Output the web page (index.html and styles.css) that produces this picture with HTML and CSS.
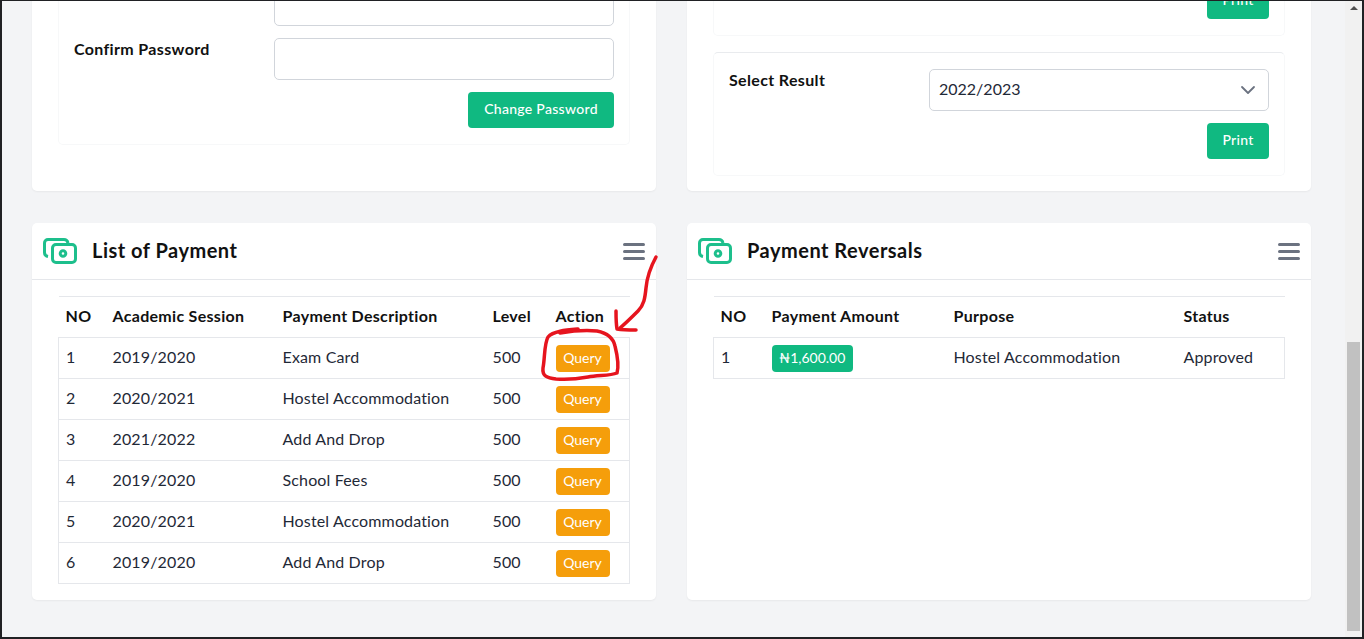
FILE: index.html
```html
<!DOCTYPE html>
<html lang="en">
<head>
    <meta charset="UTF-8">
    <meta name="viewport" content="width=device-width, initial-scale=1.0">
    <title>Student Payments</title>
    <link rel="stylesheet" href="styles.css">
</head>
<body>
    <div class="frame">
        <main class="content">
            <div class="grid">
                <section class="card card-form">
                    <div class="inner">
                        <div class="form-row">
                            <label>New Password</label>
                            <input class="field" type="password">
                        </div>
                        <div class="form-row">
                            <label>Confirm Password</label>
                            <input class="field" type="password">
                        </div>
                        <div class="form-actions">
                            <button class="btn">Change Password</button>
                        </div>
                    </div>
                </section>

                <section class="card card-print">
                    <div class="inner inner-first">
                        <div class="form-actions">
                            <button class="btn btn-print">Print</button>
                        </div>
                    </div>
                    <div class="inner">
                        <div class="form-row">
                            <label>Select Result</label>
                            <select class="field field-select">
                                <option>2022/2023</option>
                            </select>
                        </div>
                        <div class="form-actions">
                            <button class="btn btn-print">Print</button>
                        </div>
                    </div>
                </section>

                <section class="card">
                    <header class="card-head">
                        <svg class="cash-icon" viewBox="0 0 34 26" fill="none" stroke="#1dbf8c" stroke-width="3">
                            <path d="M5 18.5 C2.5 18 1.5 16.5 1.5 14.5 V5 C1.5 3 3 1.5 5 1.5 H21 C23 1.5 24.5 2.8 25 5"/>
                            <rect x="9.5" y="6.5" width="23" height="18" rx="3.5"/>
                            <circle cx="20" cy="15.5" r="2.8"/>
                        </svg>
                        <h2>List of Payment</h2>
                        <div class="menu-icon"><span></span><span></span><span></span></div>
                    </header>
                    <div class="card-body">
                        <table class="data-table payments">
                            <thead>
                                <tr><th>NO</th><th>Academic Session</th><th>Payment Description</th><th>Level</th><th>Action</th></tr>
                            </thead>
                            <tbody>
                                <tr><td>1</td><td>2019/2020</td><td>Exam Card</td><td>500</td><td><button class="pill pill-query">Query</button></td></tr>
                                <tr><td>2</td><td>2020/2021</td><td>Hostel Accommodation</td><td>500</td><td><button class="pill pill-query">Query</button></td></tr>
                                <tr><td>3</td><td>2021/2022</td><td>Add And Drop</td><td>500</td><td><button class="pill pill-query">Query</button></td></tr>
                                <tr><td>4</td><td>2019/2020</td><td>School Fees</td><td>500</td><td><button class="pill pill-query">Query</button></td></tr>
                                <tr><td>5</td><td>2020/2021</td><td>Hostel Accommodation</td><td>500</td><td><button class="pill pill-query">Query</button></td></tr>
                                <tr><td>6</td><td>2019/2020</td><td>Add And Drop</td><td>500</td><td><button class="pill pill-query">Query</button></td></tr>
                            </tbody>
                        </table>
                    </div>
                </section>

                <section class="card">
                    <header class="card-head">
                        <svg class="cash-icon" viewBox="0 0 34 26" fill="none" stroke="#1dbf8c" stroke-width="3">
                            <path d="M5 18.5 C2.5 18 1.5 16.5 1.5 14.5 V5 C1.5 3 3 1.5 5 1.5 H21 C23 1.5 24.5 2.8 25 5"/>
                            <rect x="9.5" y="6.5" width="23" height="18" rx="3.5"/>
                            <circle cx="20" cy="15.5" r="2.8"/>
                        </svg>
                        <h2>Payment Reversals</h2>
                        <div class="menu-icon"><span></span><span></span><span></span></div>
                    </header>
                    <div class="card-body">
                        <table class="data-table reversals">
                            <thead>
                                <tr><th>NO</th><th>Payment Amount</th><th>Purpose</th><th>Status</th></tr>
                            </thead>
                            <tbody>
                                <tr><td>1</td><td><span class="pill pill-amount">₦1,600.00</span></td><td>Hostel Accommodation</td><td>Approved</td></tr>
                            </tbody>
                        </table>
                    </div>
                </section>
            </div>
        </main>

        <div class="scrollbar">
            <span class="scroll-up"></span>
            <span class="scroll-thumb"></span>
        </div>

        <!-- red pen marks drawn over the screenshot -->
        <svg class="pen-marks" viewBox="0 0 1364 639" fill="none" stroke="#e6141e" stroke-width="3.5" stroke-linecap="round" stroke-linejoin="round">
            <path d="M656 257 C650 268 647 277 646 288 C645 298 644 305 638 311 C632 317 626 323 620 328"/>
            <path d="M616 311 C616 317 616 323 617 329 C623 330 630 330 636 330"/>
            <path d="M578 329 C566 330 553 331 548 337 C544 344 545 358 543 368 C542 376 547 378 556 379 C568 380 577 379 588 377 C598 375 610 376 617 373 C619 366 617 354 615 346 C613 337 607 333 597 331 C585 330 572 331 560 333"/>
        </svg>
    </div>
</body>
</html>
```

FILE: styles.css
```css
* {
    box-sizing: border-box;
}
html, body {
    margin: 0;
    height: 100%;
    overflow: hidden;
}
body {
    font-family: "Lato", "Noto Sans", sans-serif;
    font-size: 16px;
    color: #1f2937;
    background-color: #f3f4f6;
}
.frame {
    position: relative;
    display: flex;
    height: 639px;
    border: solid #202124;
    border-width: 1px 2px 2px 2px;
    overflow: hidden;
}
.content {
    flex: 1;
    display: flex;
    flex-direction: column;
    justify-content: flex-end;
    padding: 0 34px 37px 30px;
    min-width: 0;
}
.grid {
    display: grid;
    grid-template-columns: 1fr 1fr;
    gap: 32px 31px;
}
.card {
    display: flex;
    flex-direction: column;
    justify-content: flex-end;
    background-color: #fff;
    border-radius: 5px;
    box-shadow: 0 1px 2px rgba(0, 0, 0, 0.05);
}
.card-form {
    padding: 16px 26px 46px;
}
.card-print {
    padding: 16px 26px 15px;
}
.inner {
    border: 1px solid #f7f8f9;
    border-top-color: #e9ebee;
    border-radius: 5px;
    padding: 16px 15px;
    display: flex;
    flex-direction: column;
    gap: 12px;
}
.inner-first {
    margin-bottom: 16px;
}
.form-row {
    display: flex;
    align-items: flex-start;
}
.form-row label {
    width: 200px;
    padding-top: 1px;
    font-weight: 700;
    letter-spacing: 0.35px;
    color: #111;
}
.field {
    flex: 1;
    height: 42px;
    border: 1px solid #d1d5db;
    border-radius: 5px;
    padding: 0 9px 4px;
    font: inherit;
    color: #1f2937;
    background-color: #fff;
}
.field-select {
    appearance: none;
    background-image: url("data:image/svg+xml,%3Csvg xmlns='http://www.w3.org/2000/svg' viewBox='0 0 20 20' fill='none'%3E%3Cpath stroke='%236b7280' stroke-linecap='round' stroke-linejoin='round' stroke-width='1.2' d='M6 8l4 4 4-4'/%3E%3C/svg%3E");
    background-repeat: no-repeat;
    background-position: right 5px center;
    background-size: 30px 30px;
}
.form-actions {
    display: flex;
    justify-content: flex-end;
}
.btn {
    height: 36px;
    width: 146px;
    padding: 0 0 3px;
    border: 0;
    border-radius: 4px;
    background-color: #10b981;
    color: #fff;
    font: inherit;
    font-size: 14px;
    font-weight: 500;
    letter-spacing: 0.3px;
}
.btn-print {
    width: 62px;
}
.card-head {
    display: flex;
    align-items: center;
    height: 57px;
    padding: 0 11px;
    border-bottom: 1px solid #e5e7eb;
}
.cash-icon {
    width: 34px;
    height: 26px;
    flex: none;
}
.card-head h2 {
    flex: 1;
    margin: 0 0 2px 15px;
    font-size: 20px;
    font-weight: 700;
    letter-spacing: 0.5px;
    color: #111;
}
.menu-icon {
    display: flex;
    flex-direction: column;
    gap: 4px;
    width: 22px;
}
.menu-icon span {
    height: 3px;
    border-radius: 2px;
    background-color: #6b7280;
}
.card-body {
    flex: 1;
    padding: 16px 26px;
}
.data-table {
    width: 100%;
    table-layout: fixed;
    border-collapse: collapse;
}
.data-table th {
    height: 41px;
    padding: 0 7px 4px;
    text-align: left;
    font-weight: 700;
    letter-spacing: 0.3px;
    color: #111;
    border-top: 1px solid #e5e7eb;
    border-bottom: 1px solid #e5e7eb;
}
.data-table td {
    height: 41px;
    padding: 0 7px 4px;
    letter-spacing: 0.15px;
    border-bottom: 1px solid #e5e7eb;
}
.data-table td:first-child {
    border-left: 1px solid #e5e7eb;
}
.data-table td:last-child {
    border-right: 1px solid #e5e7eb;
}
.payments th:nth-child(1) { width: 47px; }
.payments th:nth-child(2) { width: 170px; }
.payments th:nth-child(3) { width: 210px; }
.payments th:nth-child(4) { width: 63px; }
.reversals th:nth-child(1) { width: 51px; }
.reversals th:nth-child(2) { width: 182px; }
.reversals th:nth-child(3) { width: 230px; }
.pill {
    display: inline-block;
    height: 27px;
    line-height: 25px;
    margin-top: 4px;
    padding: 0 7.5px;
    border: 0;
    border-radius: 4px;
    font-family: inherit;
    font-size: 14px;
    letter-spacing: 0;
    color: #fff;
    vertical-align: middle;
}
.pill-query {
    width: 54px;
    padding: 0 0 2px;
    background-color: #f59e0b;
}
.pill-amount {
    background-color: #10b981;
}
.scrollbar {
    flex: none;
    position: relative;
    width: 17px;
    background-color: #f1f1f1;
}
.scroll-up {
    position: absolute;
    top: 5px;
    left: 5px;
    border: 4px solid transparent;
    border-top: 0;
    border-bottom: 4px solid #505050;
}
.scroll-thumb {
    position: absolute;
    top: 341px;
    left: 2px;
    width: 13px;
    height: 289px;
    background-color: #c1c1c1;
}
.pen-marks {
    position: absolute;
    left: -2px;
    top: -1px;
    width: 1364px;
    height: 639px;
    pointer-events: none;
}
```
